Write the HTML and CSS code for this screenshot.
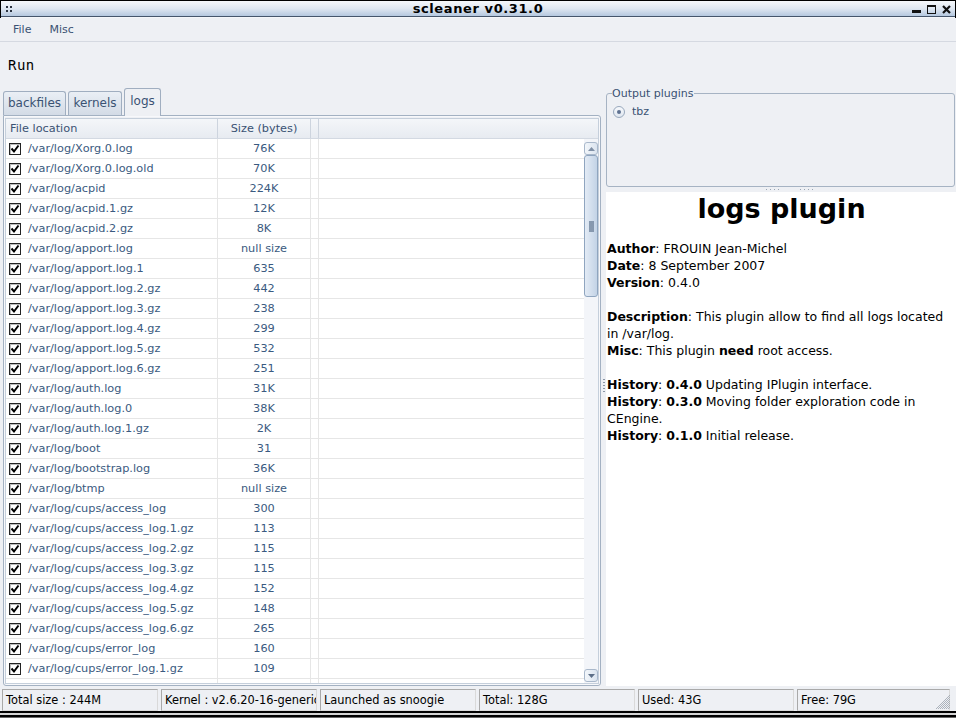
FILE: index.html
```html
<!DOCTYPE html>
<html>
<head>
<meta charset="utf-8">
<title>scleaner v0.31.0</title>
<link rel="stylesheet" href="styles.css">
</head>
<body>
<div class="window">
  <div class="titlebar">
    <span class="grab"><i></i><i></i><i></i><i></i></span>
    <span class="title">scleaner v0.31.0</span>
    <span class="wbtns">
      <svg width="9" height="9" viewBox="0 0 9 9"><rect x="0" y="5" width="9" height="3" fill="#111"/></svg>
      <svg width="9" height="9" viewBox="0 0 9 9"><rect x="0.5" y="0.5" width="8" height="8" fill="none" stroke="#111"/><rect x="0" y="0" width="9" height="2" fill="#111"/></svg>
      <svg width="9" height="9" viewBox="0 0 9 9"><path d="M1 1 L8 8 M8 1 L1 8" stroke="#111" stroke-width="2.2"/></svg>
    </span>
  </div>
  <div class="menubar">
    <span class="menu">File</span>
    <span class="menu">Misc</span>
  </div>
  <div class="toolbar">
    <span class="run">Run</span>
  </div>
  <div class="main">
    <div class="left">
      <div class="tabs">
        <div class="tab w1">backfiles</div>
        <div class="tab w2">kernels</div>
        <div class="tab active w3">logs</div>
      </div>
      <div class="panel">
        <div class="tableframe">
          <div class="thead">
            <div class="hc c1">File location</div>
            <div class="hc c2">Size (bytes)</div>
            <div class="hc c3"></div>
            <div class="hc c4"></div>
          </div>
          <div class="tbody">
            <div class="list">
              <div class="row"><div class="c1"><span class="cb"></span>/var/log/Xorg.0.log</div><div class="c2">76K</div><div class="c3"></div><div class="c4"></div></div>
              <div class="row"><div class="c1"><span class="cb"></span>/var/log/Xorg.0.log.old</div><div class="c2">70K</div><div class="c3"></div><div class="c4"></div></div>
              <div class="row"><div class="c1"><span class="cb"></span>/var/log/acpid</div><div class="c2">224K</div><div class="c3"></div><div class="c4"></div></div>
              <div class="row"><div class="c1"><span class="cb"></span>/var/log/acpid.1.gz</div><div class="c2">12K</div><div class="c3"></div><div class="c4"></div></div>
              <div class="row"><div class="c1"><span class="cb"></span>/var/log/acpid.2.gz</div><div class="c2">8K</div><div class="c3"></div><div class="c4"></div></div>
              <div class="row"><div class="c1"><span class="cb"></span>/var/log/apport.log</div><div class="c2">null size</div><div class="c3"></div><div class="c4"></div></div>
              <div class="row"><div class="c1"><span class="cb"></span>/var/log/apport.log.1</div><div class="c2">635</div><div class="c3"></div><div class="c4"></div></div>
              <div class="row"><div class="c1"><span class="cb"></span>/var/log/apport.log.2.gz</div><div class="c2">442</div><div class="c3"></div><div class="c4"></div></div>
              <div class="row"><div class="c1"><span class="cb"></span>/var/log/apport.log.3.gz</div><div class="c2">238</div><div class="c3"></div><div class="c4"></div></div>
              <div class="row"><div class="c1"><span class="cb"></span>/var/log/apport.log.4.gz</div><div class="c2">299</div><div class="c3"></div><div class="c4"></div></div>
              <div class="row"><div class="c1"><span class="cb"></span>/var/log/apport.log.5.gz</div><div class="c2">532</div><div class="c3"></div><div class="c4"></div></div>
              <div class="row"><div class="c1"><span class="cb"></span>/var/log/apport.log.6.gz</div><div class="c2">251</div><div class="c3"></div><div class="c4"></div></div>
              <div class="row"><div class="c1"><span class="cb"></span>/var/log/auth.log</div><div class="c2">31K</div><div class="c3"></div><div class="c4"></div></div>
              <div class="row"><div class="c1"><span class="cb"></span>/var/log/auth.log.0</div><div class="c2">38K</div><div class="c3"></div><div class="c4"></div></div>
              <div class="row"><div class="c1"><span class="cb"></span>/var/log/auth.log.1.gz</div><div class="c2">2K</div><div class="c3"></div><div class="c4"></div></div>
              <div class="row"><div class="c1"><span class="cb"></span>/var/log/boot</div><div class="c2">31</div><div class="c3"></div><div class="c4"></div></div>
              <div class="row"><div class="c1"><span class="cb"></span>/var/log/bootstrap.log</div><div class="c2">36K</div><div class="c3"></div><div class="c4"></div></div>
              <div class="row"><div class="c1"><span class="cb"></span>/var/log/btmp</div><div class="c2">null size</div><div class="c3"></div><div class="c4"></div></div>
              <div class="row"><div class="c1"><span class="cb"></span>/var/log/cups/access_log</div><div class="c2">300</div><div class="c3"></div><div class="c4"></div></div>
              <div class="row"><div class="c1"><span class="cb"></span>/var/log/cups/access_log.1.gz</div><div class="c2">113</div><div class="c3"></div><div class="c4"></div></div>
              <div class="row"><div class="c1"><span class="cb"></span>/var/log/cups/access_log.2.gz</div><div class="c2">115</div><div class="c3"></div><div class="c4"></div></div>
              <div class="row"><div class="c1"><span class="cb"></span>/var/log/cups/access_log.3.gz</div><div class="c2">115</div><div class="c3"></div><div class="c4"></div></div>
              <div class="row"><div class="c1"><span class="cb"></span>/var/log/cups/access_log.4.gz</div><div class="c2">152</div><div class="c3"></div><div class="c4"></div></div>
              <div class="row"><div class="c1"><span class="cb"></span>/var/log/cups/access_log.5.gz</div><div class="c2">148</div><div class="c3"></div><div class="c4"></div></div>
              <div class="row"><div class="c1"><span class="cb"></span>/var/log/cups/access_log.6.gz</div><div class="c2">265</div><div class="c3"></div><div class="c4"></div></div>
              <div class="row"><div class="c1"><span class="cb"></span>/var/log/cups/error_log</div><div class="c2">160</div><div class="c3"></div><div class="c4"></div></div>
              <div class="row"><div class="c1"><span class="cb"></span>/var/log/cups/error_log.1.gz</div><div class="c2">109</div><div class="c3"></div><div class="c4"></div></div>
              <div class="row empty"><div class="c1"></div><div class="c2"></div><div class="c3"></div><div class="c4"></div></div>
            </div>
            <div class="scrollbar">
              <div class="sbtn"><svg width="7" height="4" viewBox="0 0 7 4"><path d="M0 4 L3.5 0 L7 4Z" fill="#8090a6"/></svg></div>
              <div class="thumb"><span class="grip"></span></div>
              <div class="track"></div>
              <div class="sbtn"><svg width="7" height="4" viewBox="0 0 7 4"><path d="M0 0 L3.5 4 L7 0Z" fill="#5d6f88"/></svg></div>
            </div>
          </div>
        </div>
      </div>
    </div>
    <div class="vsplit"><span class="vdots"></span></div>
    <div class="right">
      <fieldset class="group">
        <legend>Output plugins</legend>
        <div class="radio-row"><span class="radio"><span class="dot"></span></span>tbz</div>
      </fieldset>
      <div class="hsplit"><span class="hdots"></span><span class="hdots"></span></div>
      <div class="html">
        <h1>logs plugin</h1>
        <p><b>Author</b>: FROUIN Jean-Michel<br><b>Date</b>: 8 September 2007<br><b>Version</b>: 0.4.0</p>
        <p><b>Description</b>: This plugin allow to find all logs located<br>in /var/log.<br><b>Misc</b>: This plugin <b>need</b> root access.</p>
        <p><b>History</b>: <b>0.4.0</b> Updating IPlugin interface.<br><b>History</b>: <b>0.3.0</b> Moving folder exploration code in<br>CEngine.<br><b>History</b>: <b>0.1.0</b> Initial release.</p>
      </div>
    </div>
  </div>
  <div class="statusbar">
    <div class="seg">Total size : 244M</div>
    <div class="seg">Kernel : v2.6.20-16-generic</div>
    <div class="seg">Launched as snoogie</div>
    <div class="seg">Total: 128G</div>
    <div class="seg">Used: 43G</div>
    <div class="seg last">Free: 79G</div>
    <svg class="sizegrip" width="16" height="16" viewBox="0 0 16 16"><path d="M15 3 L3 15 M15 7 L7 15 M15 11 L11 15 M15 1 L1 15 M15 5 L5 15 M15 9 L9 15 M15 13 L13 15" stroke="#9aa3ad" stroke-width="0.8"/></svg>
  </div>
  <div class="frame-bottom"></div>
</div>
</body>
</html>
```
FILE: styles.css
```css
* { box-sizing: border-box; }
body {
  margin: 0;
  width: 956px;
  height: 718px;
  overflow: hidden;
  background: #eef0f4;
  font-family: "DejaVu Sans", sans-serif;
  font-size: 11px;
  color: #000;
}
.window { display: flex; flex-direction: column; height: 718px; }

.titlebar {
  height: 18px;
  border: 1px solid #000;
  border-bottom: none;
  background: linear-gradient(#f6f8fb, #dfe7f1 45%, #a9bfda);
  box-shadow: inset 0 -1px 0 #f4f6f9, inset 0 -2px 0 #45556b;
  position: relative;
  display: flex;
  align-items: center;
  justify-content: center;
  padding-bottom: 2px;
}
.title { font-weight: bold; font-size: 13px; letter-spacing: 0.6px; }
.grab { position: absolute; left: 5px; top: 5px; width: 6px; height: 6px; display: grid; grid-template-columns: 2px 2px; gap: 1px 2px; }
.grab i { width: 2px; height: 2px; background: #2b3340; }
.wbtns { position: absolute; right: 4px; top: 4px; display: flex; gap: 6px; }

.menubar {
  height: 24px;
  border-bottom: 1px solid #d5d9e1;
  display: flex;
  align-items: center;
  padding-left: 13px;
}
.menu { color: #3a5273; margin-right: 18px; }

.toolbar { height: 45px; display: flex; align-items: center; padding-left: 8px; }
.run { font-family: "DejaVu Sans Mono", monospace; font-size: 14px; font-weight: 200; letter-spacing: 0.5px; }

.main { height: 599px; display: flex; }
.left { width: 601px; padding-left: 3px; display: flex; flex-direction: column; }
.tabs { height: 28px; display: flex; align-items: flex-end; gap: 2px; position: relative; z-index: 1; }
.tab {
  height: 24px;
  border: 1px solid #a0aec0;
  border-bottom: none;
  border-radius: 3px 3px 0 0;
  background: linear-gradient(#eaeff5, #d3dbe6);
  color: #3a5273;
  text-align: center;
  line-height: 22px;
  font-size: 12px;
}
.tab.w1 { width: 63px; }
.tab.w2 { width: 54px; }
.tab.w3 { width: 37px; }
.tab.active {
  height: 28px;
  margin-bottom: -1px;
  background: #eef0f4;
  color: #3a5273;
  line-height: 24px;
}
.panel {
  height: 571px;
  border: 1px solid #a3b1c2;
  border-radius: 0 3px 3px 3px;
  padding: 2px 1px 1px 1px;
  box-shadow: inset 0 0 0 1px #f7f8fb;
}
.tableframe {
  height: 100%;
  border: 1px solid #c5cfdb;
  background: #fff;
  display: flex;
  flex-direction: column;
}
.thead {
  height: 20px;
  display: grid;
  grid-template-columns: 212px 93px 8px 1fr;
  background: linear-gradient(#f4f6f9, #e7ebf1);
  border-bottom: 1px solid #d3d9e2;
  color: #3a5273;
  font-size: 11.3px;
}
.hc { border-right: 1px solid #cdd4de; line-height: 19px; }
.hc.c1 { padding-left: 4px; }
.hc.c2 { text-align: center; }
.hc.c4 { border-right: none; }
.tbody { flex: 1; display: flex; min-height: 0; }
.list { flex: 1; overflow: hidden; }
.row {
  height: 20px;
  display: grid;
  grid-template-columns: 212px 93px 8px 1fr;
  border-bottom: 1px solid #e6e6e6;
  color: #3a5a80;
  line-height: 19px;
  font-size: 11.3px;
}
.row > div { border-right: 1px solid #e6e6e6; white-space: nowrap; overflow: hidden; }
.row > .c4 { border-right: none; }
.row .c1 { display: flex; align-items: center; padding-left: 3px; }
.row .c2 { text-align: center; }
.cb {
  width: 12px;
  height: 12px;
  margin-right: 7px;
  border: 1px solid #222;
  background: #fff url("data:image/svg+xml,%3Csvg xmlns='http://www.w3.org/2000/svg' width='10' height='10' viewBox='0 0 10 10'%3E%3Cpath d='M1.5 4.5 L4 7.5 L8.5 1.5' fill='none' stroke='%23000' stroke-width='2'/%3E%3C/svg%3E") center/10px 10px no-repeat;
  box-shadow: inset 1px 1px 0 #bbb;
  flex: none;
}
.scrollbar {
  width: 14px;
  background: #f3f5f9;
  display: flex;
  flex-direction: column;
  padding: 3px 0 1px;
}
.sbtn {
  height: 13px;
  border: 1px solid #a9b8cb;
  border-radius: 3px;
  background: linear-gradient(90deg, #f2f6fa, #dbe4ef);
  display: flex;
  align-items: center;
  justify-content: center;
}
.thumb {
  height: 142px;
  border: 1px solid #8fa5bf;
  border-radius: 3px;
  background: linear-gradient(90deg, #e3ebf5, #c3d3e6);
  display: flex;
  align-items: center;
  justify-content: center;
}
.grip {
  width: 5px;
  height: 11px;
  background: radial-gradient(circle, #8193aa 0.7px, transparent 0.8px) 0 0/2px 2px;
}
.track { flex: 1; }

.vsplit { width: 5px; display: flex; align-items: center; justify-content: center; }
.vdots { width: 2px; height: 15px; background: repeating-linear-gradient(#8a96a6 0 1px, transparent 1px 3px); }

.right { flex: 1; display: flex; flex-direction: column; }
.group {
  margin: 0 1px 0 0;
  height: 100px;
  border: 1px solid #a6b3c3;
  border-radius: 3px;
  padding: 0 5px;
  min-width: 0;
}
.group legend { padding: 0 1px 0 0; color: #3a5273; line-height: 13px; font-size: 11px; }
.radio-row { display: flex; align-items: center; color: #3a5273; margin-top: 5px; margin-left: 1px; height: 13px; }
.radio {
  width: 12px;
  height: 12px;
  border-radius: 50%;
  border: 1px solid #98a8bc;
  background: linear-gradient(#f7f9fc, #dfe6ef);
  display: flex;
  align-items: center;
  justify-content: center;
  margin-right: 7px;
}
.radio .dot { width: 4px; height: 4px; border-radius: 50%; background: #5e7190; }
.hsplit { height: 5px; display: flex; align-items: center; justify-content: center; gap: 18px; padding-left: 20px; }
.hdots { width: 16px; height: 1px; background: repeating-linear-gradient(90deg, #9aa5b3 0 1px, transparent 1px 4px); }
.html {
  flex: 1;
  background: #fff;
  padding-left: 1px;
  font-size: 12.5px;
  line-height: 17px;
  color: #000;
  overflow: hidden;
}
.html h1 {
  margin: 0;
  text-align: center;
  font-size: 27px;
  line-height: 31px;
  padding-top: 1px;
}
.html p { margin: 17px 0 0; white-space: nowrap; }
.html h1 + p { margin-top: 16px; }

.statusbar {
  height: 25px;
  display: flex;
  gap: 3px;
  padding: 3px 0 0 2px;
  position: relative;
  font-size: 11.4px;
}
.seg {
  width: 156px;
  height: 22px;
  border: 1px solid;
  border-color: #a9a9a9 #d9d9d9 #d9d9d9 #a9a9a9;
  padding-left: 3px;
  line-height: 20px;
  white-space: nowrap;
  overflow: hidden;
}
.seg.last { width: 153px; }
.sizegrip { position: absolute; right: 5px; bottom: 1px; }
.frame-bottom {
  height: 7px;
  background: linear-gradient(#000 0 2px, #d4d4d4 2px 4px, #000 4px 6px, #666 6px);
}
```
